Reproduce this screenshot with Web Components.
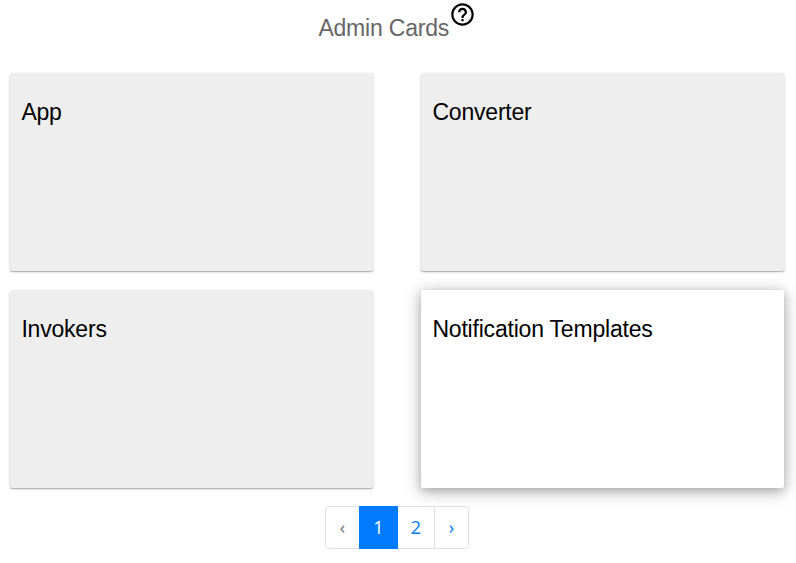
<!DOCTYPE html>
<html lang="en"><head><meta charset="utf-8"><title>Admin Cards</title>
<style>body{margin:0;background:#fff;font-family:"Liberation Sans",Arial,sans-serif}</style></head><body>
<admin-page></admin-page>
<script>
const define=(name,html)=>customElements.define(name,class extends HTMLElement{constructor(){super();const t=document.createElement('template');t.innerHTML=html;this.attachShadow({mode:'open'}).append(t.content.cloneNode(true));}});
define('help-icon',`<style>:host{display:block;width:27px;height:27px;padding-top:1px;margin-left:-.5px}svg{display:block}</style><svg width="27" height="27" viewBox="0 0 24 24"><path d="M11 18h2v-2h-2v2zm1-16C6.480 2 2 6.480 2 12s4.480 10 10 10 10-4.480 10-10S17.520 2 12 2zm0 18c-4.410 0-8-3.590-8-8s3.590-8 8-8 8 3.590 8 8-3.590 8-8 8zm0-14c-2.210 0-4 1.790-4 4h2c0-1.100.9-2 2-2s2 .9 2 2c0 2-3 1.750-3 5h2c0-2.250 3-2.500 3-5 0-2.210-1.790-4-4-4z"/></svg>`);
define('page-title',`<style>:host{display:flex;justify-content:center;height:73px;box-sizing:border-box;padding-right:2px}span{font-size:23px;line-height:28px;padding-top:14px;color:#666;letter-spacing:-.2px}</style><span><slot></slot></span><help-icon></help-icon>`);
define('admin-card',`<style>:host{display:block;box-sizing:border-box;height:198px;padding:25px 11.4px;background:#eee;border-radius:2.5px;color:#000;box-shadow:0 1px 3px rgba(0,0,0,.2),0 1px 1px rgba(0,0,0,.14),0 1px 1px rgba(0,0,0,.06)}:host([active]){background:#fff;border-radius:2px;box-shadow:0 3px 8px rgba(0,0,0,.18),0 3px 18px 1px rgba(0,0,0,.24)}h2{margin:0;font-weight:400;font-size:23px;line-height:28px;letter-spacing:-.2px}</style><h2><slot></slot></h2>`);
define('page-link',`<style>:host{display:flex;box-sizing:border-box;justify-content:center;align-items:center;width:35px;height:43px;padding-bottom:1px;border:1px solid #dee2e6;margin-left:-1px;color:#007bff;font:18px/26px "Open Sans",sans-serif}:host([first]){margin:0;border-radius:4px 0 0 4px;color:#6c757d}:host([last]){border-radius:0 4px 4px 0}:host([num]){width:38px}:host([active]){width:39px;background:#007bff;border-color:#007bff;color:#fff;position:relative;z-index:1}</style><slot></slot>`);
define('page-nav',`<style>:host{display:flex;justify-content:center;padding-right:2px}</style><slot></slot>`);
define('admin-page',`<style>:host{display:block}main{display:grid;grid-template-columns:363px 363px;column-gap:48px;row-gap:19px;padding:0 0 18px 10px}</style><page-title>Admin Cards</page-title><main><admin-card>App</admin-card><admin-card>Converter</admin-card><admin-card>Invokers</admin-card><admin-card active>Notification Templates</admin-card></main><page-nav><page-link first>‹</page-link><page-link active>1</page-link><page-link num>2</page-link><page-link last>›</page-link></page-nav>`);
</script></body></html>
